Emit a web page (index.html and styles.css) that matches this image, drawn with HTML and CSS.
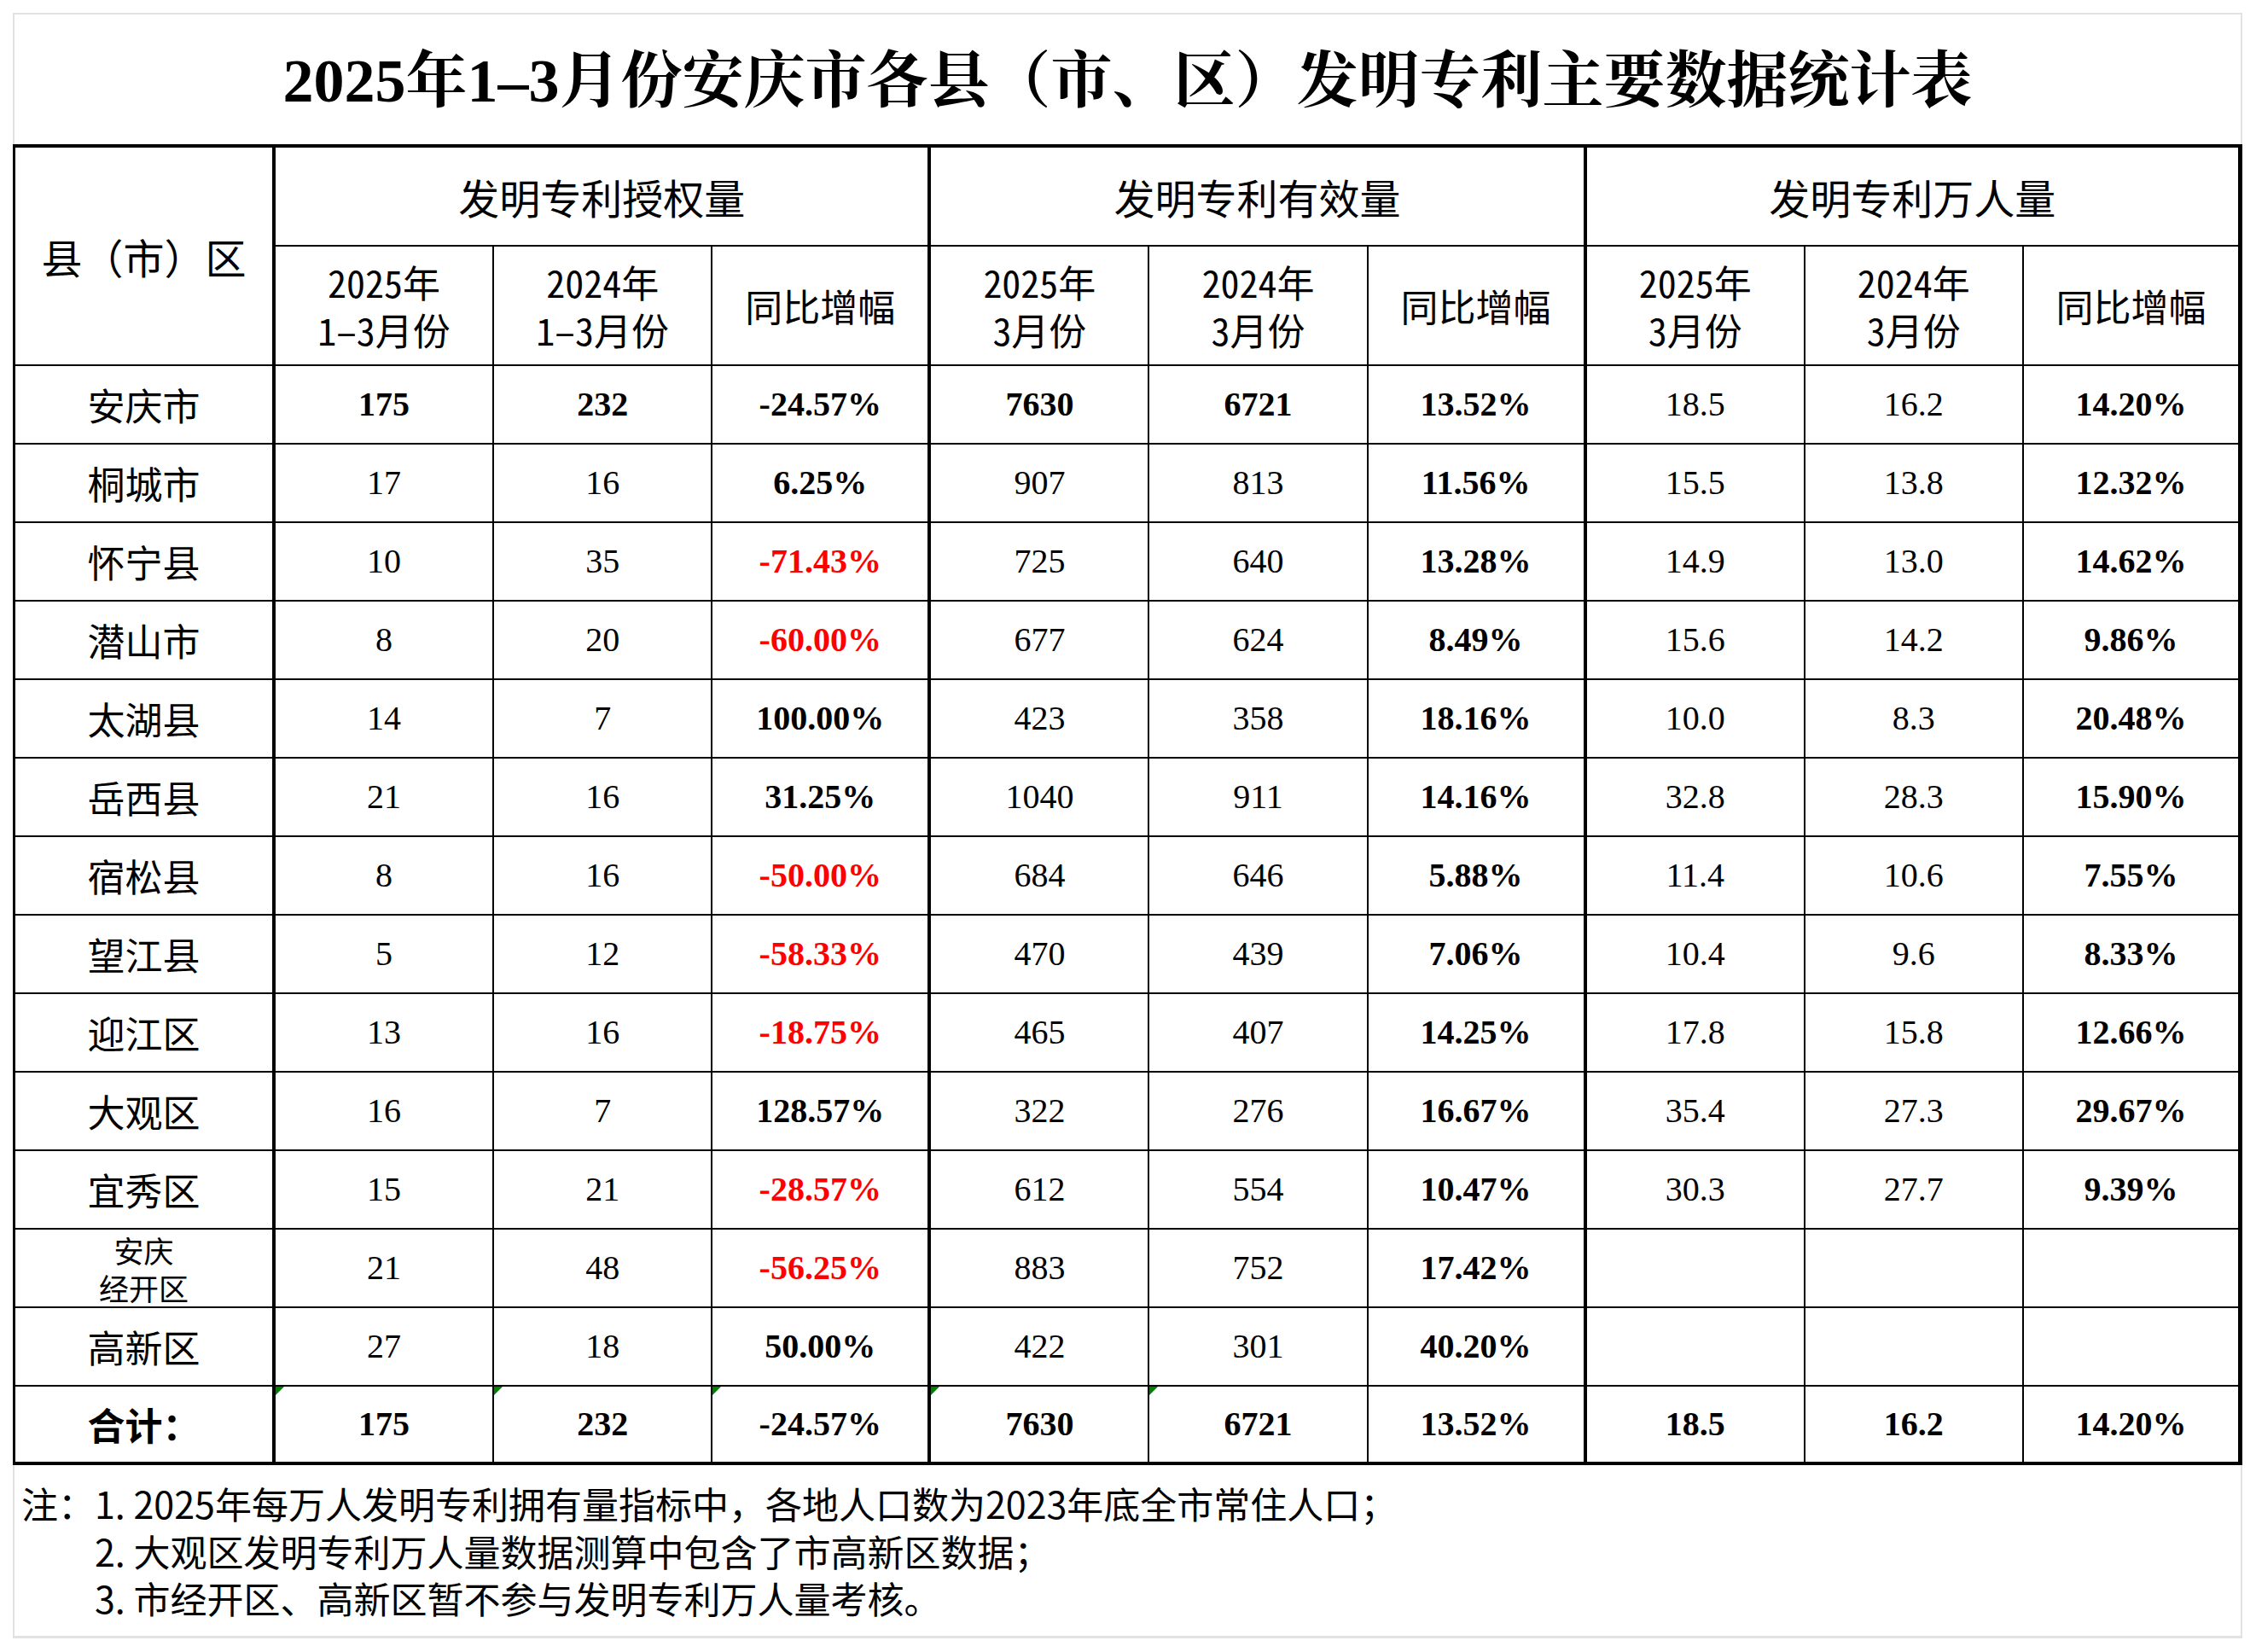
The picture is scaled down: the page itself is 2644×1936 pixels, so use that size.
FILE: index.html
```html
<!DOCTYPE html>
<html lang="zh-CN">
<head>
<meta charset="utf-8">
<title>2025年1–3月份安庆市各县（市、区）发明专利主要数据统计表</title>
<link rel="stylesheet" href="styles.css">
</head>
<body>
<div class="sheet">
  <h1 class="title">2025年1–3月份安庆市各县（市、区）发明专利主要数据统计表</h1>
  <table class="stats">
    <colgroup>
      <col class="c-name">
      <col span="9">
    </colgroup>
    <thead>
      <tr class="h1">
        <th rowspan="2" class="name-head">县（市）区</th>
        <th colspan="3">发明专利授权量</th>
        <th colspan="3">发明专利有效量</th>
        <th colspan="3">发明专利万人量</th>
      </tr>
      <tr class="h2">
        <th>2025年<br>1–3月份</th>
        <th>2024年<br>1–3月份</th>
        <th>同比增幅</th>
        <th>2025年<br>3月份</th>
        <th>2024年<br>3月份</th>
        <th>同比增幅</th>
        <th>2025年<br>3月份</th>
        <th>2024年<br>3月份</th>
        <th>同比增幅</th>
      </tr>
    </thead>
    <tbody>
      <tr><td>安庆市</td><td class="b">175</td><td class="b">232</td><td class="b">-24.57%</td><td class="b">7630</td><td class="b">6721</td><td class="b">13.52%</td><td>18.5</td><td>16.2</td><td class="b">14.20%</td></tr>
      <tr><td>桐城市</td><td>17</td><td>16</td><td class="b">6.25%</td><td>907</td><td>813</td><td class="b">11.56%</td><td>15.5</td><td>13.8</td><td class="b">12.32%</td></tr>
      <tr><td>怀宁县</td><td>10</td><td>35</td><td class="b r">-71.43%</td><td>725</td><td>640</td><td class="b">13.28%</td><td>14.9</td><td>13.0</td><td class="b">14.62%</td></tr>
      <tr><td>潜山市</td><td>8</td><td>20</td><td class="b r">-60.00%</td><td>677</td><td>624</td><td class="b">8.49%</td><td>15.6</td><td>14.2</td><td class="b">9.86%</td></tr>
      <tr><td>太湖县</td><td>14</td><td>7</td><td class="b">100.00%</td><td>423</td><td>358</td><td class="b">18.16%</td><td>10.0</td><td>8.3</td><td class="b">20.48%</td></tr>
      <tr><td>岳西县</td><td>21</td><td>16</td><td class="b">31.25%</td><td>1040</td><td>911</td><td class="b">14.16%</td><td>32.8</td><td>28.3</td><td class="b">15.90%</td></tr>
      <tr><td>宿松县</td><td>8</td><td>16</td><td class="b r">-50.00%</td><td>684</td><td>646</td><td class="b">5.88%</td><td>11.4</td><td>10.6</td><td class="b">7.55%</td></tr>
      <tr><td>望江县</td><td>5</td><td>12</td><td class="b r">-58.33%</td><td>470</td><td>439</td><td class="b">7.06%</td><td>10.4</td><td>9.6</td><td class="b">8.33%</td></tr>
      <tr><td>迎江区</td><td>13</td><td>16</td><td class="b r">-18.75%</td><td>465</td><td>407</td><td class="b">14.25%</td><td>17.8</td><td>15.8</td><td class="b">12.66%</td></tr>
      <tr><td>大观区</td><td>16</td><td>7</td><td class="b">128.57%</td><td>322</td><td>276</td><td class="b">16.67%</td><td>35.4</td><td>27.3</td><td class="b">29.67%</td></tr>
      <tr><td>宜秀区</td><td>15</td><td>21</td><td class="b r">-28.57%</td><td>612</td><td>554</td><td class="b">10.47%</td><td>30.3</td><td>27.7</td><td class="b">9.39%</td></tr>
      <tr><td class="small-name">安庆<br>经开区</td><td>21</td><td>48</td><td class="b r">-56.25%</td><td>883</td><td>752</td><td class="b">17.42%</td><td></td><td></td><td></td></tr>
      <tr><td>高新区</td><td>27</td><td>18</td><td class="b">50.00%</td><td>422</td><td>301</td><td class="b">40.20%</td><td></td><td></td><td></td></tr>
      <tr class="total"><td>合计：</td><td class="b flag">175</td><td class="b flag">232</td><td class="b flag">-24.57%</td><td class="b flag">7630</td><td class="b flag">6721</td><td class="b">13.52%</td><td class="b">18.5</td><td class="b">16.2</td><td class="b">14.20%</td></tr>
    </tbody>
  </table>
  <div class="notes">
    <p class="note"><span class="note-lead">注：</span>1. 2025年每万人发明专利拥有量指标中，各地人口数为2023年底全市常住人口；</p>
    <p class="note indent">2. 大观区发明专利万人量数据测算中包含了市高新区数据；</p>
    <p class="note indent">3. 市经开区、高新区暂不参与发明专利万人量考核。</p>
  </div>
</div>
</body>
</html>
```

FILE: styles.css
```css
html, body {
  margin: 0;
  padding: 0;
  background: #ffffff;
}

body {
  font-family: "Noto Sans CJK SC", "Noto Sans", sans-serif;
  color: #000000;
}

.sheet {
  width: 2613px;
  margin: 15px 0 0 15px;
}

.title {
  box-sizing: border-box;
  height: 154px;
  margin: 0;
  padding-top: 4px;
  border: 2px solid #e2e2e2;
  border-bottom: 0;
  display: flex;
  align-items: center;
  justify-content: center;
  font-family: "Liberation Serif", "Noto Serif CJK SC", "Noto Sans CJK SC", serif;
  font-weight: 700;
  font-size: 72px;
  line-height: 1;
  white-space: nowrap;
}

.stats {
  width: 2613px;
  table-layout: fixed;
  border-collapse: separate;
  border-spacing: 0;
  border-top: 4px solid #000;
  border-left: 3px solid #000;
}

.c-name {
  width: 305px;
}

.stats th,
.stats td {
  padding: 0;
  border-right: 2px solid #000;
  border-bottom: 2px solid #000;
  text-align: center;
  vertical-align: middle;
  white-space: nowrap;
}

.stats th {
  font-weight: 400;
  font-family: "Noto Sans CJK SC", sans-serif;
}

.h1 {
  height: 116px;
}

.h1 th {
  font-size: 48px;
  border-right-width: 4px;
}

.h1 th:last-child {
  border-right-width: 5px;
}

.h2 {
  height: 140px;
}

.h2 th {
  font-size: 44px;
  line-height: 56px;
  font-feature-settings: "hwid";
}

.h2 th:nth-child(3),
.h2 th:nth-child(6) {
  border-right-width: 4px;
}

.h2 th:last-child {
  border-right-width: 5px;
}

.stats tbody tr {
  height: 92px;
}

.stats tbody td {
  font-family: "Liberation Serif", "Times New Roman", serif;
  font-size: 40px;
  line-height: 1.2;
}

.stats tbody td:first-child {
  font-family: "Noto Sans CJK SC", sans-serif;
  font-size: 44px;
  line-height: 1.2;
}

.stats tbody td:nth-child(1),
.stats tbody td:nth-child(4),
.stats tbody td:nth-child(7) {
  border-right-width: 4px;
}

.stats tbody td:last-child {
  border-right-width: 5px;
}

.stats tbody tr:last-child td {
  border-bottom-width: 4px;
}

.stats tbody td.small-name {
  font-size: 35px;
  line-height: 44px;
  padding-top: 2px;
}

.total td:first-child {
  font-weight: 700;
}

.b {
  font-weight: 700;
}

.r {
  color: #ff0000;
}

.flag {
  position: relative;
}

.flag::before {
  content: "";
  position: absolute;
  top: 0;
  left: 0;
  width: 0;
  height: 0;
  border-top: 10px solid #008000;
  border-right: 10px solid transparent;
}

.notes {
  box-sizing: border-box;
  height: 203px;
  padding: 17px 0 0 8px;
  border: 2px solid #e2e2e2;
  border-top: 0;
  border-bottom-width: 3px;
  font-family: "Noto Sans CJK SC", sans-serif;
  font-size: 43px;
}

.note {
  margin: 0;
  line-height: 55.5px;
  white-space: nowrap;
}

.indent {
  padding-left: 2em;
}
```
